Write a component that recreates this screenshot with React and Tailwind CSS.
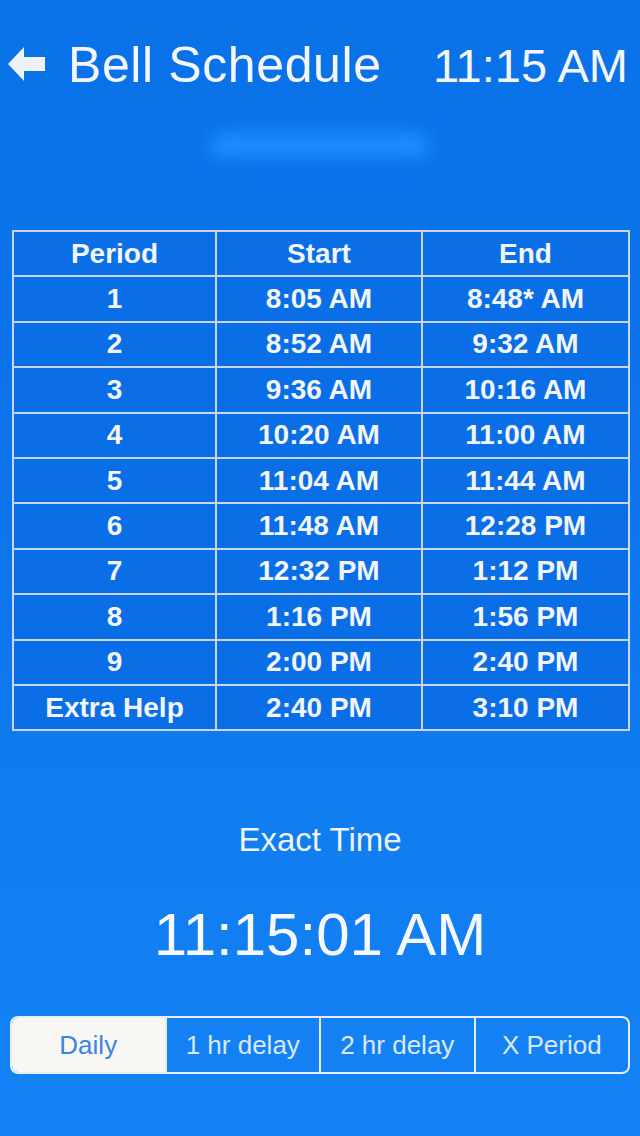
import React from 'react';

const ROWS = [
  ['1', '8:05 AM', '8:48* AM'],
  ['2', '8:52 AM', '9:32 AM'],
  ['3', '9:36 AM', '10:16 AM'],
  ['4', '10:20 AM', '11:00 AM'],
  ['5', '11:04 AM', '11:44 AM'],
  ['6', '11:48 AM', '12:28 PM'],
  ['7', '12:32 PM', '1:12 PM'],
  ['8', '1:16 PM', '1:56 PM'],
  ['9', '2:00 PM', '2:40 PM'],
  ['Extra Help', '2:40 PM', '3:10 PM'],
];

const TABS = ['Daily', '1 hr delay', '2 hr delay', 'X Period'];

function BackArrow() {
  return (
    <svg width="38" height="36" viewBox="0 0 38 36" className="shrink-0">
      <polygon points="0,18 16,1 16,11 37,11 37,25 16,25 16,35" fill="#eef1f5" />
    </svg>
  );
}

export default function App() {
  return (
    <div
      className="w-[640px] h-[1136px] overflow-hidden flex flex-col text-white bg-[linear-gradient(180deg,#0a72e9_0%,#0b74ea_40%,#0f7cf0_70%,#1583f5_100%)]"
      style={{ fontFamily: '"Liberation Sans", Arial, sans-serif' }}
    >
      {/* header */}
      <header className="flex items-baseline justify-between pt-[40px] pl-[8px] pr-[12px] leading-none">
        <div className="flex items-baseline gap-[22px]">
          <BackArrow />
          <h1 className="text-[50px] tracking-[0.6px] text-[#f4f6f9]">Bell Schedule</h1>
        </div>
        <span className="text-[47px] text-[#f4f6f9]">11:15 AM</span>
      </header>

      {/* soft glow under the title */}
      <div className="mt-[42px] mx-auto w-[220px] h-[26px] rounded-full bg-[#1d8cff] blur-[8px]" />

      {/* schedule table */}
      <div className="mt-[72px] px-[12px]">
        <table className="w-[616px] table-fixed border-collapse border-2 border-[#c9d5e7] text-[28px] font-bold text-[#f2f5fa]">
          <colgroup>
            <col className="w-[203px]" />
            <col className="w-[206px]" />
            <col className="w-[207px]" />
          </colgroup>
          <thead>
            <tr className="bg-[#0a6fe6]">
              <th className="h-[45.4px] border-2 border-[#c9d5e7] p-0 font-bold">Period</th>
              <th className="h-[45.4px] border-2 border-[#c9d5e7] p-0 font-bold">Start</th>
              <th className="h-[45.4px] border-2 border-[#c9d5e7] p-0 font-bold">End</th>
            </tr>
          </thead>
          <tbody>
            {ROWS.map(r => (
              <tr key={r[0]} className="bg-[#0a6ee7]">
                {r.map((c, i) => (
                  <td key={i} className="h-[45.4px] border-2 border-[#c9d5e7] p-0 text-center">{c}</td>
                ))}
              </tr>
            ))}
          </tbody>
        </table>
      </div>

      {/* exact time */}
      <div className="mt-[92px] flex flex-col items-center leading-none">
        <p className="text-[33px] text-[#eef3fa]">Exact Time</p>
        <p className="mt-[49px] text-[60px] text-[#f6f8fb]">11:15:01 AM</p>
      </div>

      {/* schedule type selector */}
      <div className="mt-[51px] mx-[10px] flex h-[58px] rounded-[8px] border-2 border-[#e6edf7] overflow-hidden text-[26px]">
        {TABS.map((t, i) => (
          <button
            key={t}
            className={
              i === 0
                ? 'flex-1 bg-[#f8f7f3] text-[#3a86e2]'
                : 'flex-1 border-l-2 border-[#e6edf7] text-[#dce8f8]'
            }
          >
            {t}
          </button>
        ))}
      </div>
    </div>
  );
}
